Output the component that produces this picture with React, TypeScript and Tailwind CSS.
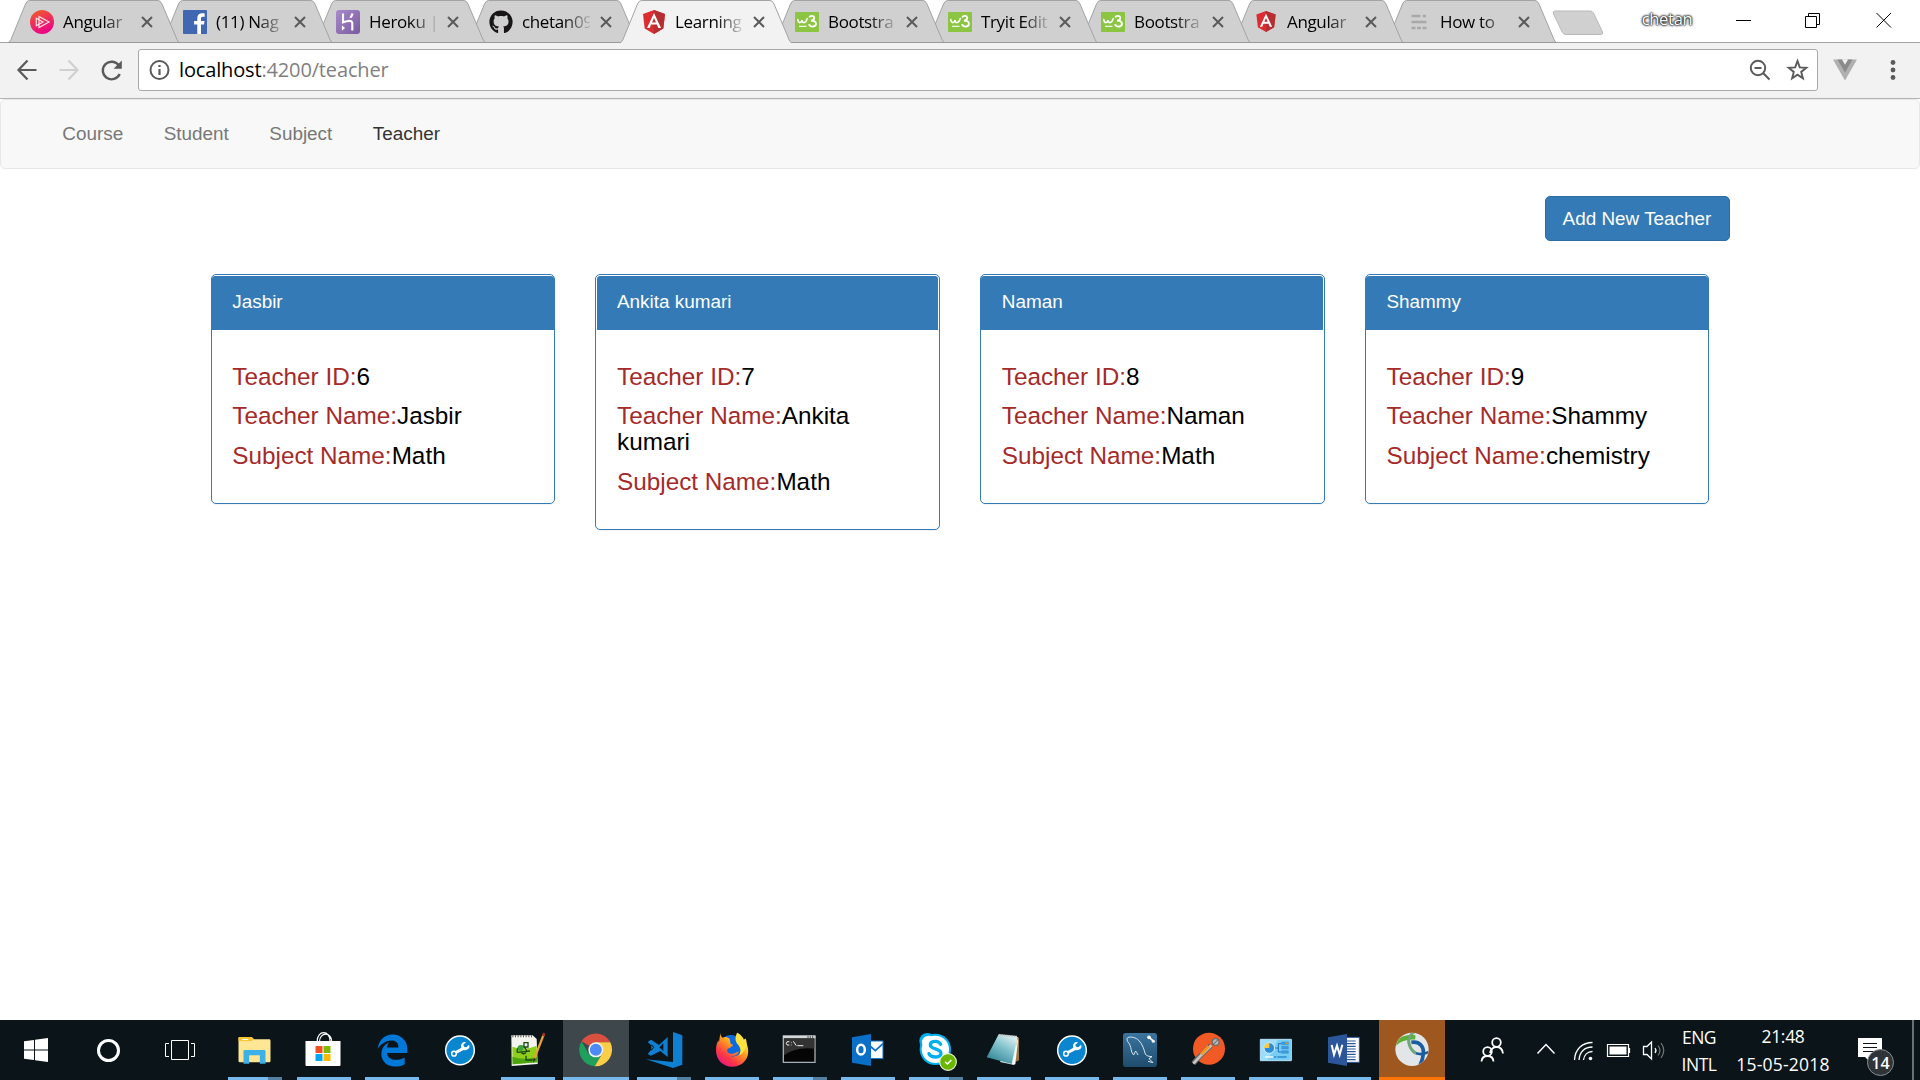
import React from "react";
import { FaGithub, FaEdgeLegacy } from "react-icons/fa6";

const UI = "font-['Open_Sans','Noto_Sans',sans-serif]";

function AngularLogo({ small = false }: { small?: boolean }) {
  return (
    <svg className={small ? "h-[21px] w-6" : "h-6 w-6"} viewBox="0 0 24 24">
      <path d="M12 0 23 4 21.3 18.6 12 24 2.7 18.6 1 4Z" fill="#dd2b32" />
      <path d="M12 0 23 4 21.3 18.6 12 24Z" fill="#b52e31" />
      <path d="M12 3 5 18h2.7l1.4-3.5h5.8l1.4 3.5H19ZM12 8l2 4.4h-4Z" fill="#fff" fillRule="evenodd" />
    </svg>
  );
}

function PluralsightLogo() {
  return (
    <svg className="h-6 w-6" viewBox="0 0 24 24">
      <defs>
        <linearGradient id="ps" x1="0.2" y1="0" x2="0.6" y2="1">
          <stop offset="0" stopColor="#f15b2a" />
          <stop offset="1" stopColor="#ec008c" />
        </linearGradient>
      </defs>
      <circle cx="12" cy="12" r="12" fill="url(#ps)" />
      <path d="M9 6.5 19 12 9 17.5ZM6.3 8.2 13 12 6.3 15.8Z" fill="none" stroke="#fff" strokeOpacity="0.9" strokeWidth="1.1" />
    </svg>
  );
}

function FacebookLogo() {
  return (
    <svg className="h-6 w-6" viewBox="0 0 24 24">
      <rect width="24" height="24" rx="0.7" fill="#4267b2" />
      <path d="M14.3 24v-9.4h-3.2v-3.7h3.2V8.2c0-3.2 2-4.9 4.8-4.9 1.3 0 2.2.1 2.6.15v3.3h-1.8c-1.6 0-1.9.8-1.9 1.8v2.4h3.5l-.5 3.6h-3V24Z" fill="#fff" />
    </svg>
  );
}

function HerokuLogo() {
  return (
    <svg className="h-6 w-6" viewBox="0 0 24 24">
      <defs>
        <linearGradient id="hk" x1="0" y1="0" x2="1" y2="1">
          <stop offset="0" stopColor="#a78bcb" />
          <stop offset="1" stopColor="#7a5a9f" />
        </linearGradient>
      </defs>
      <rect width="24" height="24" rx="3" fill="url(#hk)" />
      <path d="M7 3.5v8.900c2.400-1.200 9.300-3 9.300 0.800v7.300" fill="none" stroke="#fff" strokeWidth="2.1" />
      <path d="M5.900 15.200 9 18l-3.100 2.800ZM17.400 3.500h-2.300c-.2 1.800-.9 3-1.800 4.200h2.400c1-1.200 1.500-2.600 1.700-4.200Z" fill="#fff" />
    </svg>
  );
}

function W3Logo() {
  return (
    <svg className="h-6 w-6" viewBox="0 0 24 24">
      <rect y="2" width="24" height="20" rx="1" fill="#8bc541" />
      <path d="M2.800 9.500c.2 2.200.8 3.100 1.900 3.100s2-1 2.200-2.600c.1 1.500.8 2.600 2 2.600 1.500 0 2.600-1.600 3.300-4" fill="none" stroke="#fff" strokeWidth="1.600" strokeLinecap="round" />
      <path d="M14.600 6.800c1.200-1.300 4.400-1.300 4.600.7.200 1.900-1.400 2.900-3.200 3.200 2.700-.2 4.900.6 4.900 3 0 3.300-4.700 3.900-6.700 1.200" fill="none" stroke="#fff" strokeWidth="1.900" strokeLinecap="round" />
      <path d="M4 16.300h7.500" stroke="#fff" strokeWidth="1.100" />
    </svg>
  );
}

function ScotchLogo() {
  return (
    <svg className="h-6 w-6" viewBox="0 0 24 24">
      <path d="M4.500 6h9M15.800 6h3.200M4.500 12H19.500M4.500 18h4M10 18h4M15.500 18h4" stroke="#a9a9a9" strokeWidth="2.600" />
    </svg>
  );
}

const tabs: { title: string; icon: React.ReactNode; active?: boolean }[] = [
  { title: "Angular", icon: <PluralsightLogo /> },
  { title: "(11) Nag", icon: <FacebookLogo /> },
  { title: "Heroku |", icon: <HerokuLogo /> },
  { title: "chetan09", icon: <FaGithub className="h-6 w-6 text-[#181616]" /> },
  { title: "Learning", icon: <AngularLogo />, active: true },
  { title: "Bootstra", icon: <W3Logo /> },
  { title: "Tryit Edit", icon: <W3Logo /> },
  { title: "Bootstra", icon: <W3Logo /> },
  { title: "Angular", icon: <AngularLogo small /> },
  { title: "How to", icon: <ScotchLogo /> },
];

const layers = ["z-[9]", "z-[8]", "z-[7]", "z-[6]", "z-10", "z-[5]", "z-[4]", "z-[3]", "z-[2]", "z-[1]"];

function Tab({ title, icon, active, layer }: { title: string; icon: React.ReactNode; active?: boolean; layer: string }) {
  return (
    <div className={`relative -mr-[19px] h-[43px] w-[172px] shrink-0 ${layer}`}>
      <svg className="absolute inset-0" width="172" height="43" viewBox="0 0 172 43">
        <path
          d="M0.500 43 Q2 42 3 39.500L17.500 4Q19 0.500 21.500 0.500H150Q152.500 0.500 154 4L169 39.500Q170 42 171.500 43Z"
          fill={active ? "#f2f2f2" : "#d0d0d0"}
        />
        <path
          d="M0.500 42.500Q2 41.500 3 39.500L17.500 4Q19 0.500 21.500 0.500H150Q152.500 0.500 154 4L169 39.500Q170 42 171.500 42.500"
          fill="none"
          stroke="#a3a3a3"
        />
        {!active && <path d="M0 42.500H172" stroke="#999" />}
      </svg>
      <div className="relative flex h-[43px] items-center pl-[22px]">
        {icon}
        <span className={`ml-[9px] w-[68px] overflow-hidden whitespace-nowrap text-[17px] leading-6 tracking-[-0.350px] text-black [mask-image:linear-gradient(to_right,#000_60%,rgba(0,0,0,0.1))] ${UI}`}>
          {title}
        </span>
        <svg className="ml-[10px]" width="12" height="12" viewBox="0 0 12 12">
          <path d="M1 1 11 11M11 1 1 11" stroke="#5a5a5a" strokeWidth="2" />
        </svg>
      </div>
    </div>
  );
}

function TabStrip() {
  return (
    <div className="flex h-[43px] items-start border-b border-[#a3a3a3] bg-white pl-2">
      {tabs.map((t, i) => (
        <Tab key={i} {...t} layer={layers[i]} />
      ))}
      <svg className="ml-[14px] mt-[10px] shrink-0" width="52" height="26" viewBox="0 0 52 26">
        <path d="M3 1H38Q40.500 1 41.500 3L50.500 22Q51 24.500 49 24.500H14Q11.500 24.500 10.500 22.500L1.500 4Q0.500 1 3 1Z" fill="#d0d0d0" stroke="#b9b9b9" />
      </svg>
      <div className={`ml-[36px] mt-[8px] w-[54px] text-center text-[16.500px] leading-[22px] tracking-[-0.300px] text-white [text-shadow:0_0_2px_#000,0_0_2px_#000,0_0_3px_#222] ${UI}`}>chetan</div>
      <svg className="ml-[42px] mt-[12px] shrink-0" width="158" height="18" viewBox="0 0 158 18" fill="none" stroke="#000">
        <path d="M0 8.500H15M69.500 4.500h11v11h-11zM72.500 4V1.500h11v11H81M140.500 1 155 15.500M155 1 140.500 15.500" />
      </svg>
    </div>
  );
}

function Toolbar() {
  return (
    <div className="flex h-[56px] items-center border-b border-[#b3b3b3] bg-[#f2f2f2]">
      <svg className="-mt-[2px] ml-4 shrink-0" width="108" height="24" viewBox="0 0 108 24" fill="none" strokeWidth="2.200">
        <path d="M11.500 2.500 2.500 12l9 9.500M2.500 12H20.500" stroke="#5a5a5a" />
        <path d="M52.500 2.500l9 9.500-9 9.500M61.500 12H43.500" stroke="#d0d0d0" />
        <path d="M103 7.700A8.800 8.800 0 1 0 103.700 16" stroke="#5a5a5a" strokeWidth="2.400" />
        <path d="M105.800 2.500V10.700H97.600Z" fill="#5a5a5a" />
      </svg>
      <div className="-mt-px ml-[14px] flex h-[42px] w-[1680px] items-center rounded-[3px] border border-[#a9a9a9] bg-white">
        <svg className="ml-[10px]" width="22" height="22" viewBox="0 0 22 22">
          <circle cx="10.500" cy="11" r="9" fill="none" stroke="#5a5a5a" strokeWidth="2" />
          <path d="M10.500 10v6M10.500 6v2.100" stroke="#5a5a5a" strokeWidth="2.200" />
        </svg>
        <div className={`ml-[8px] flex-1 text-[20px] leading-8 tracking-[-0.150px] text-[#808080] ${UI}`}>
          <span className="text-black">localhost</span>:4200/teacher
        </div>
        <svg className="mr-[8px]" width="60" height="24" viewBox="0 0 60 24" fill="none" stroke="#5a5a5a" strokeWidth="2">
          <circle cx="9" cy="10" r="7.200" />
          <path d="M5.500 10h7M14 15l6.500 6.500" />
          <path d="M48.500 3l2.300 6.400 6.500.4-5.100 4.100 1.700 6.400-5.400-3.600-5.400 3.600 1.700-6.400-5.100-4.100 6.500-.4Z" strokeWidth="1.900" />
        </svg>
      </div>
      <svg className="-mt-[2px] ml-[14px]" width="26" height="24" viewBox="0 0 26 24">
        <path d="M1 1.500H25L13 22.500Z" fill="#b0b0b0" />
        <path d="M5.500 1.500H10L13 7l3-5.500h4.500L13 14.500Z" fill="#8a8a8a" />
        <path d="M10 1.500h6L13 6.500Z" fill="#f2f2f2" />
      </svg>
      <svg className="-mt-[2px] ml-[31px]" width="8" height="24" viewBox="0 0 8 24" fill="#5a5a5a">
        <circle cx="4" cy="4.500" r="2.400" />
        <circle cx="4" cy="12" r="2.400" />
        <circle cx="4" cy="19.500" r="2.400" />
      </svg>
    </div>
  );
}

const teachers = [
  { id: 6, name: "Jasbir", subject: "Math", header: "px-[20.750px]" },
  { id: 7, name: "Ankita kumari", subject: "Math", header: "mx-px px-[19.750px]" },
  { id: 8, name: "Naman", subject: "Math", header: "mr-px px-[20.750px]" },
  { id: 9, name: "Shammy", subject: "chemistry", header: "px-[20.750px]" },
];

function Field({ label, value }: { label: string; value: React.ReactNode }) {
  return (
    <h4 className="mb-[13.500px] text-[24.300px] leading-[26px] text-black">
      <span className="text-[#a52a2a]">{label}:</span>
      {value}
    </h4>
  );
}

function Page() {
  return (
    <main className="h-[921px] bg-white font-['Liberation_Sans',Arial,sans-serif] text-[18.900px] leading-[27px]">
      <nav className="flex h-[70px] items-center rounded-[5px] border border-[#e7e7e7] bg-[#f8f8f8] pb-[2px] pl-[41px]">
        {["Course", "Student", "Subject", "Teacher"].map((n) => (
          <a key={n} className={`px-[20.250px] ${n === "Teacher" ? "text-[#333]" : "text-[#777]"}`}>
            {n}
          </a>
        ))}
      </nav>
      <div className="mx-auto w-[1539px] pt-[27px]">
        <div className="flex justify-end">
          <button className="h-[45px] w-[185px] rounded-[5px] border border-[#2e6da4] bg-[#337ab7] text-white">Add New Teacher</button>
        </div>
      </div>
      <div className="mx-auto mt-[33px] grid w-[1539px] grid-cols-4 items-start">
        {teachers.map((t) => (
          <div key={t.id} className="pl-[20px] pr-[20.250px]">
            <section className="rounded-[5px] border border-[#337ab7] bg-white pt-px shadow-[0_1px_1px_rgba(0,0,0,0.050)]">
              <header className={`h-[54px] rounded-t-[3px] bg-[#337ab7] pt-[11.500px] text-white ${t.header}`}>{t.name}</header>
              <div className="px-[20.750px] pb-[20.750px] pt-[33.750px]">
                <Field label="Teacher ID" value={t.id} />
                <Field label="Teacher Name" value={t.name} />
                <Field label="Subject Name" value={t.subject} />
              </div>
            </section>
          </div>
        ))}
      </div>
    </main>
  );
}

function Icon({ x, children }: { x: number; children: React.ReactNode }) {
  return (
    <svg width="40" height="40" viewBox={`${x} 60 120 120`}>
      {children}
    </svg>
  );
}

const Wrench = (
  <Icon x={120}>
    <circle cx="180" cy="121" r="43" fill="#0a86d1" stroke="#fff" strokeWidth="4.500" />
    <path d="M165 129 194 113" stroke="#fff" strokeWidth="9" />
    <circle cx="162" cy="131" r="7" fill="#0a86d1" stroke="#fff" strokeWidth="4.500" />
    <path d="M207 104l-8 8-7-1-2-7 8-7c-8-3-15 3-15 11 0 9 8 15 15 12 8-2 13-8 9-16Z" fill="#fff" />
  </Icon>
);

const apps: { name: string; icon: React.ReactNode; kind: "open" | "multi" | "none" | "focus" | "alert"; wide?: boolean }[] = [
  {
    name: "Explorer", kind: "multi", wide: true,
    icon: (
      <Icon x={703.5}>
        <path d="M714 84q0-3 3-3h36l7 7h46q4 0 4 4v61q0 4-4 4h-88q-4 0-4-4Z" fill="#ffe694" />
        <path d="M714 84q0-3 3-3h36l7 6-6 6h-40Z" fill="#fbc62d" />
        <path d="M725 88.500h18" stroke="#fff" strokeWidth="3" />
        <path d="M729 161v-37q0-4 4-4h58q4 0 4 4v37h-17v-25h-32v25Z" fill="#3bb1e8" />
      </Icon>
    ),
  },
  {
    name: "Store", kind: "open", wide: true,
    icon: (
      <Icon x={910.5}>
        <path d="M950 95c0-36 39-36 39 0M957 95c0-30 37-30 37 0" fill="none" stroke="#fff" strokeWidth="3.500" />
        <path d="M915 93h105v72q0 3-3 3h-99q-3 0-3-3Z" fill="#fff" />
        <path d="M945 108h21v21h-21z" fill="#f25022" />
        <path d="M969 108h21v21h-21z" fill="#7fba00" />
        <path d="M945 132h21v21h-21z" fill="#00a4ef" />
        <path d="M969 132h21v21h-21z" fill="#ffb900" />
      </Icon>
    ),
  },
  { name: "Edge", kind: "open", icon: <FaEdgeLegacy className="h-[33px] w-[33px] text-[#0078d7]" /> },
  { name: "Support", kind: "none", icon: Wrench },
  {
    name: "Notepad++", kind: "open",
    icon: (
      <Icon x={324}>
        <path d="M334 76h64l12 11 3 75-78 6Z" fill="#f4f4ee" />
        <path d="M337 110q35 14 73-3l1 50-73 6Z" fill="#8fcf1c" />
        <path d="M337 140q35 12 74 0v17l-73 6Z" fill="#4ea512" />
        <path d="M337 79h60" stroke="#555" strokeWidth="6" strokeDasharray="3 5" />
        <path d="M352 128c-4-16 14-26 24-13s-6 22-12 12M352 127l38-4M372 98h12v13h-12zM378 137v13h20" fill="none" stroke="#1c4a16" strokeWidth="4" />
        <circle cx="362" cy="114" r="9" fill="#3fa33a" />
        <path d="M431 74 403 146" stroke="#e8a22d" strokeWidth="7" />
        <path d="M429 78l4-9" stroke="#a33324" strokeWidth="7" />
        <path d="M401 144l-2 14 9-11Z" fill="#3a2a1a" />
      </Icon>
    ),
  },
  {
    name: "Chrome", kind: "focus",
    icon: (
      <Icon x={528}>
        <path d="M587.500 119 544.500 94A50 50 0 0 1 631 97H587.500Z" fill="#d95040" />
        <path d="M544.500 94A50 50 0 0 0 584 169L607 130 587.500 119 566 131Z" fill="#1fa15d" />
        <path d="M631 97A50 50 0 0 1 584 169L608 129 587 97Z" fill="#fccd47" />
        <circle cx="587.500" cy="119.500" r="22.500" fill="#f4f4f4" />
        <circle cx="587.500" cy="119.500" r="18" fill="#4c8bf5" />
      </Icon>
    ),
  },
  {
    name: "Code", kind: "multi",
    icon: (
      <Icon x={732}>
        <path d="M819 66 847 76V164L819 174 738 148 819 156Z" fill="#0f7fd1" />
        <path d="M803 81V141L781 123 753 137 743 132 760 112 743 96 753 89 777 105ZM790 100 778 112 790 123ZM754 103V122L763 112Z" fill="#0f7fd1" fillRule="evenodd" />
      </Icon>
    ),
  },
  {
    name: "Firefox", kind: "open",
    icon: (
      <Icon x={936}>
        <defs>
          <linearGradient id="fx" x1="0.900" y1="0" x2="0.200" y2="1">
            <stop offset="0.150" stopColor="#fff44f" />
            <stop offset="0.450" stopColor="#ff9a1f" />
            <stop offset="0.750" stopColor="#ff3647" />
            <stop offset="1" stopColor="#e31587" />
          </linearGradient>
        </defs>
        <circle cx="993" cy="110" r="35" fill="#0a6be0" />
        <path d="M961 68c0 8 3 12 7 15 8-3 14-2 21 4l3 14 7 4c-4 8-15 9-18 14 0 8 6 13 16 12 9-1 12-6 20-6-6 11-17 14-27 13 28 8 40-17 32-35-2-6-6-9-10-12 1-9-2-17 0-23 8 7 14 15 17 25l4-7c9 16 15 34 10 51-7 21-25 33-46 33-28 0-49-21-49-48 0-17 4-26 8-31l1 9c0-8 2-14 4-32Z" fill="url(#fx)" />
        <path d="M1011 68c-5 14-8 24 4 37 8 11 8 20 2 32 18-9 28-33 20-52l-4 7c-3-10-12-20-22-24Z" fill="#ffe23d" />
      </Icon>
    ),
  },
  {
    name: "Command Prompt", kind: "multi",
    icon: (
      <Icon x={1140}>
        <path d="M1150 78h95v79h-95z" fill="#050505" stroke="#a9aeb2" strokeWidth="4" />
        <path d="M1152 86h91v30q-55-6-91 20Z" fill="#333" />
        <path d="M1149 77h97v8h-97z" fill="#d3d8db" />
        <path d="M1222 81h20" stroke="#555" strokeWidth="4" strokeDasharray="4 3" />
        <path d="M1168 95q-9-2-9 5t9 5M1174 97v2M1174 104v2M1180 94l9 13M1192 107h18" fill="none" stroke="#eee" strokeWidth="3" />
      </Icon>
    ),
  },
  {
    name: "Outlook", kind: "open",
    icon: (
      <Icon x={144}>
        <path d="M210 93h39v53h-39z" fill="#fff" stroke="#0a6fc7" strokeWidth="3" />
        <path d="M210 108 226 122 249 101" fill="none" stroke="#0a6fc7" strokeWidth="5" />
        <path d="M156 82 213 72V168L156 158Z" fill="#0a6fc7" />
        <ellipse cx="183" cy="119" rx="11.500" ry="14.500" fill="none" stroke="#fff" strokeWidth="7.500" />
      </Icon>
    ),
  },
  {
    name: "Skype", kind: "multi",
    icon: (
      <svg width="42" height="42" viewBox="345 57 126 126">
        <circle cx="382" cy="93" r="24" fill="#00aff0" />
        <circle cx="430" cy="142" r="24" fill="#00aff0" />
        <circle cx="406" cy="118" r="47" fill="#00aff0" />
        <circle cx="406" cy="118" r="41" fill="#fff" />
        <circle cx="386" cy="97" r="20" fill="#fff" />
        <path d="M422 103c-7-13-31-11-31 2 0 14 32 9 32 25 0 15-31 14-36 1" fill="none" stroke="#00aff0" strokeWidth="10" strokeLinecap="round" />
        <circle cx="444" cy="156" r="25" fill="#6bb700" stroke="#e7f2d8" strokeWidth="3.500" />
        <path d="M435 155l7 7 12-12" fill="none" stroke="#fff" strokeWidth="4.500" />
      </svg>
    ),
  },
  {
    name: "Notepad", kind: "open",
    icon: (
      <Icon x={552}>
        <defs>
          <linearGradient id="np" x1="0.800" y1="0" x2="0.200" y2="1">
            <stop offset="0" stopColor="#e5f3f4" />
            <stop offset="0.450" stopColor="#7fc0cb" />
            <stop offset="1" stopColor="#2c7f90" />
          </linearGradient>
        </defs>
        <path d="M650 80l7 3v68l-11 5Z" fill="#9a7a43" />
        <path d="M652 80 643 165 600 156Z" fill="#e9eeee" />
        <path d="M596 73 653 79 635 162 560 142Z" fill="url(#np)" />
        <path d="M653 84 637 163h9l8-70Z" fill="#f7f9f9" />
        <path d="M597 75 651 80" stroke="#c5c5c5" strokeWidth="6" strokeDasharray="3 2" />
      </Icon>
    ),
  },
  { name: "Support Assistant", kind: "open", icon: Wrench },
  {
    name: "Workbench", kind: "open",
    icon: (
      <Icon x={960}>
        <defs>
          <linearGradient id="wb" x1="0" y1="0" x2="0" y2="1">
            <stop offset="0" stopColor="#3a75a0" />
            <stop offset="1" stopColor="#1f4c6c" />
          </linearGradient>
        </defs>
        <rect x="969" y="69" width="102" height="102" rx="8" fill="url(#wb)" />
        <path d="M1014 135c-3-5-4-9-7-12l-6 12-6-9c-2-10-3-18-8-26-6-6-8-14-4-17 9-4 25-1 34 9 11 12 15 26 19 40 4 7 12 7 20 8l-9 6 12 12-15-4" fill="none" stroke="#d8e5ee" strokeWidth="3" />
        <path d="M1045 80l17 15" stroke="#fff" strokeWidth="5" />
        <circle cx="1047" cy="82" r="5.500" fill="#fff" />
        <circle cx="1060" cy="94" r="4.500" fill="#fff" />
      </Icon>
    ),
  },
  {
    name: "Postman", kind: "open",
    icon: (
      <Icon x={-36}>
        <circle cx="27" cy="116" r="48" fill="#f15a24" />
        <path d="M-20 160 0 138 32 107" stroke="#666" strokeWidth="15" fill="none" />
        <path d="M-20 161 0 139 34 106" stroke="#c9c6c0" strokeWidth="8" fill="none" />
        <path d="M3 133 26 109" stroke="#f7941e" strokeWidth="9" />
        <circle cx="47" cy="96" r="13" fill="#707070" />
        <circle cx="47" cy="96" r="8" fill="#b9b9b9" />
        <path d="M40 103l14-14" stroke="#555" strokeWidth="3" />
      </Icon>
    ),
  },
  {
    name: "Control Panel", kind: "open",
    icon: (
      <Icon x={168}>
        <path d="M181 88h93v64h-93z" fill="#76cdf6" stroke="#b8e6fb" strokeWidth="3" />
        <path d="M183 90h50l-30 60h-20Z" fill="#9bddfa" />
        <circle cx="208" cy="114" r="16" fill="#2b8dd6" stroke="#d8f1fd" strokeWidth="3" />
        <path d="M208 114V98a16 16 0 0 0-16 16Z" fill="#ffc83d" />
        <path d="M226 114h9v-13h9M235 114v12h9" fill="none" stroke="#1a6fb5" strokeWidth="3" />
        <path d="M245 96h20v8h-20zM245 109h20v8h-20zM245 122h20v8h-20z" fill="#3f9ee0" stroke="#2377b8" />
        <path d="M257 100h6" stroke="#ff9d1c" strokeWidth="4" />
        <path d="M195 141h26" stroke="#fff" strokeWidth="4" />
        <path d="M221 141h8M232 141h28" stroke="#2c8ace" strokeWidth="4" />
      </Icon>
    ),
  },
  {
    name: "Word", kind: "open",
    icon: (
      <Icon x={372}>
        <path d="M438 82h40v75h-40z" fill="#fff" stroke="#2b579a" strokeWidth="3" />
        <path d="M441 93h26M441 101h26M441 109h26M441 117h26M441 125h26M441 133h26M441 141h26M441 149h26" stroke="#2b579a" strokeWidth="3.500" />
        <path d="M384 82 441 72V168L384 158Z" fill="#2b579a" />
        <path d="M395 105l7 29 9-27 8 27 8-30" fill="none" stroke="#fff" strokeWidth="6" />
      </Icon>
    ),
  },
  {
    name: "AnyConnect", kind: "alert",
    icon: (
      <Icon x={576}>
        <defs>
          <clipPath id="globe"><circle cx="636" cy="118" r="49" /></clipPath>
        </defs>
        <circle cx="636" cy="118" r="50" fill="#e3e6e8" />
        <g clipPath="url(#globe)" fill="none">
          <path d="M582 104c14-16 38-24 64-22" stroke="#5fae35" strokeWidth="13" />
          <path d="M642 66c-14 10-18 22-15 34 3 14 10 24 21 30" stroke="#6fa57a" strokeWidth="9" />
          <path d="M634 97c26-4 38 14 36 34-1 16-6 28-12 40" stroke="#1a5da0" strokeWidth="11" />
          <path d="M648 130c12 4 26 2 40-4" stroke="#1a5da0" strokeWidth="8" />
        </g>
      </Icon>
    ),
  },
];

function Taskbar() {
  return (
    <footer className={`flex h-[60px] bg-[#0b1419] text-white ${UI}`}>
      <div className="flex w-[72px] items-center justify-center">
        <svg width="24" height="24" viewBox="0 0 24 24" fill="#fff">
          <path d="M0 3.300 10 2v9.500H0ZM11 1.800 24 0v11.500H11ZM0 12.500h10V22L0 20.700ZM11 12.500h13V24l-13-1.800Z" />
        </svg>
      </div>
      <div className="flex w-[72px] items-center justify-center">
        <div className="h-[23px] w-[23px] rounded-full border-[3px] border-white" />
      </div>
      <div className="mr-1 flex w-[72px] items-center justify-center">
        <svg width="30" height="20" viewBox="0 0 30 20" fill="none" stroke="#fff">
          <path d="M6.500 0.500h17v19h-17zM4 3.500H0.500v13H4M26 3.500h3.500v13H26" />
        </svg>
      </div>
      {apps.map((a) => {
        const full = a.kind === "focus" || a.kind === "alert";
        return (
          <div key={a.name} className={`flex flex-col items-center ${a.wide ? "w-[69px]" : "w-[68px]"}`}>
            <div className={`flex h-[57px] items-center justify-center pt-[3px] ${full ? "w-[66px]" : "w-full"} ${a.kind === "focus" ? "bg-[#3d474c]" : a.kind === "alert" ? "bg-[#9e571f]" : ""}`}>
              {a.icon}
            </div>
            {a.kind !== "none" && (
              <div className={`flex h-[3px] justify-end ${full ? "w-[66px]" : "w-[54px]"} ${a.kind === "alert" ? "bg-[#ff7300]" : "bg-[#76b9ed]"}`}>
                {a.kind === "multi" && <div className="w-[14px] bg-[#557fa0]" />}
              </div>
            )}
          </div>
        );
      })}
      <svg className="ml-[31px] mt-[15px]" width="190" height="28" viewBox="0 0 190 28" fill="none" stroke="#fff" strokeWidth="1.800">
        <circle cx="19.500" cy="7.500" r="4.300" />
        <path d="M13 18c1-4 3-6 6.500-6s6 2.500 6.500 6.500" />
        <circle cx="10.500" cy="16.500" r="4.300" />
        <path d="M4.500 26.500c.3-4 2.500-5.500 6-5.500s5.700 1.500 6 5.500" />
        <path d="M60.500 18.500 69 9.500 77.500 18.500" strokeWidth="1.500" />
        <g strokeWidth="1.300">
          <path d="M97.500 25C98 14.500 105 7.500 115.500 7.500" />
          <path d="M102 25C102.500 17 107.500 12 115.500 12" />
          <path d="M106.500 25C107 20 110.500 16.500 115.500 16.500" />
        </g>
        <circle cx="113.500" cy="23.500" r="1.800" fill="#fff" stroke="none" />
        <path d="M130.500 9.500h21v12h-21zM152.500 13v5" strokeWidth="1.200" />
        <path d="M132.500 11.500h17v8h-17z" fill="#fff" stroke="none" />
        <path d="M166.500 11.500h3.500l4.500-4.500v17l-4.500-4.500h-3.500Z" strokeWidth="1.300" />
        <path d="M178 13q2 2.500 0 5" strokeWidth="1.200" />
        <path d="M181 10.500q4 5 0 10M184 8q5.500 7.500 0 15" strokeWidth="1.200" stroke="#777" />
      </svg>
      <div className="ml-[8px] mt-[4px] w-[48px] text-center text-[17.500px] leading-[27px] tracking-[-0.500px]">
        <div>ENG</div>
        <div>INTL</div>
      </div>
      <div className="ml-[13px] mt-[3px] w-[94px] text-center text-[17.500px] leading-[28px]">
        <div className="-mt-px tracking-[-0.300px]">21:48</div>
        <div className="whitespace-nowrap tracking-[0.200px]">15-05-2018</div>
      </div>
      <div className="relative ml-auto mr-[18px] mt-[18px] h-[36px] w-[36px]">
        <svg width="24" height="26" viewBox="0 0 24 26">
          <path d="M0 0h24v19H13v6l-6-6H0Z" fill="#fff" />
          <path d="M5 5.500h14M5 9.500h14M5 13.500h14" stroke="#0b1419" />
        </svg>
        <div className="absolute left-[9px] top-[11px] flex h-[27px] w-[27px] items-center justify-center rounded-full border border-[#8a8f92] bg-[#2f3438] text-[16px] font-semibold">14</div>
      </div>
      <div className="mr-[6px] h-full w-[2px] bg-[#6a7175]" />
    </footer>
  );
}

export default function App() {
  return (
    <div className="flex h-[1080px] w-[1920px] flex-col overflow-hidden bg-white">
      <TabStrip />
      <Toolbar />
      <Page />
      <Taskbar />
    </div>
  );
}
